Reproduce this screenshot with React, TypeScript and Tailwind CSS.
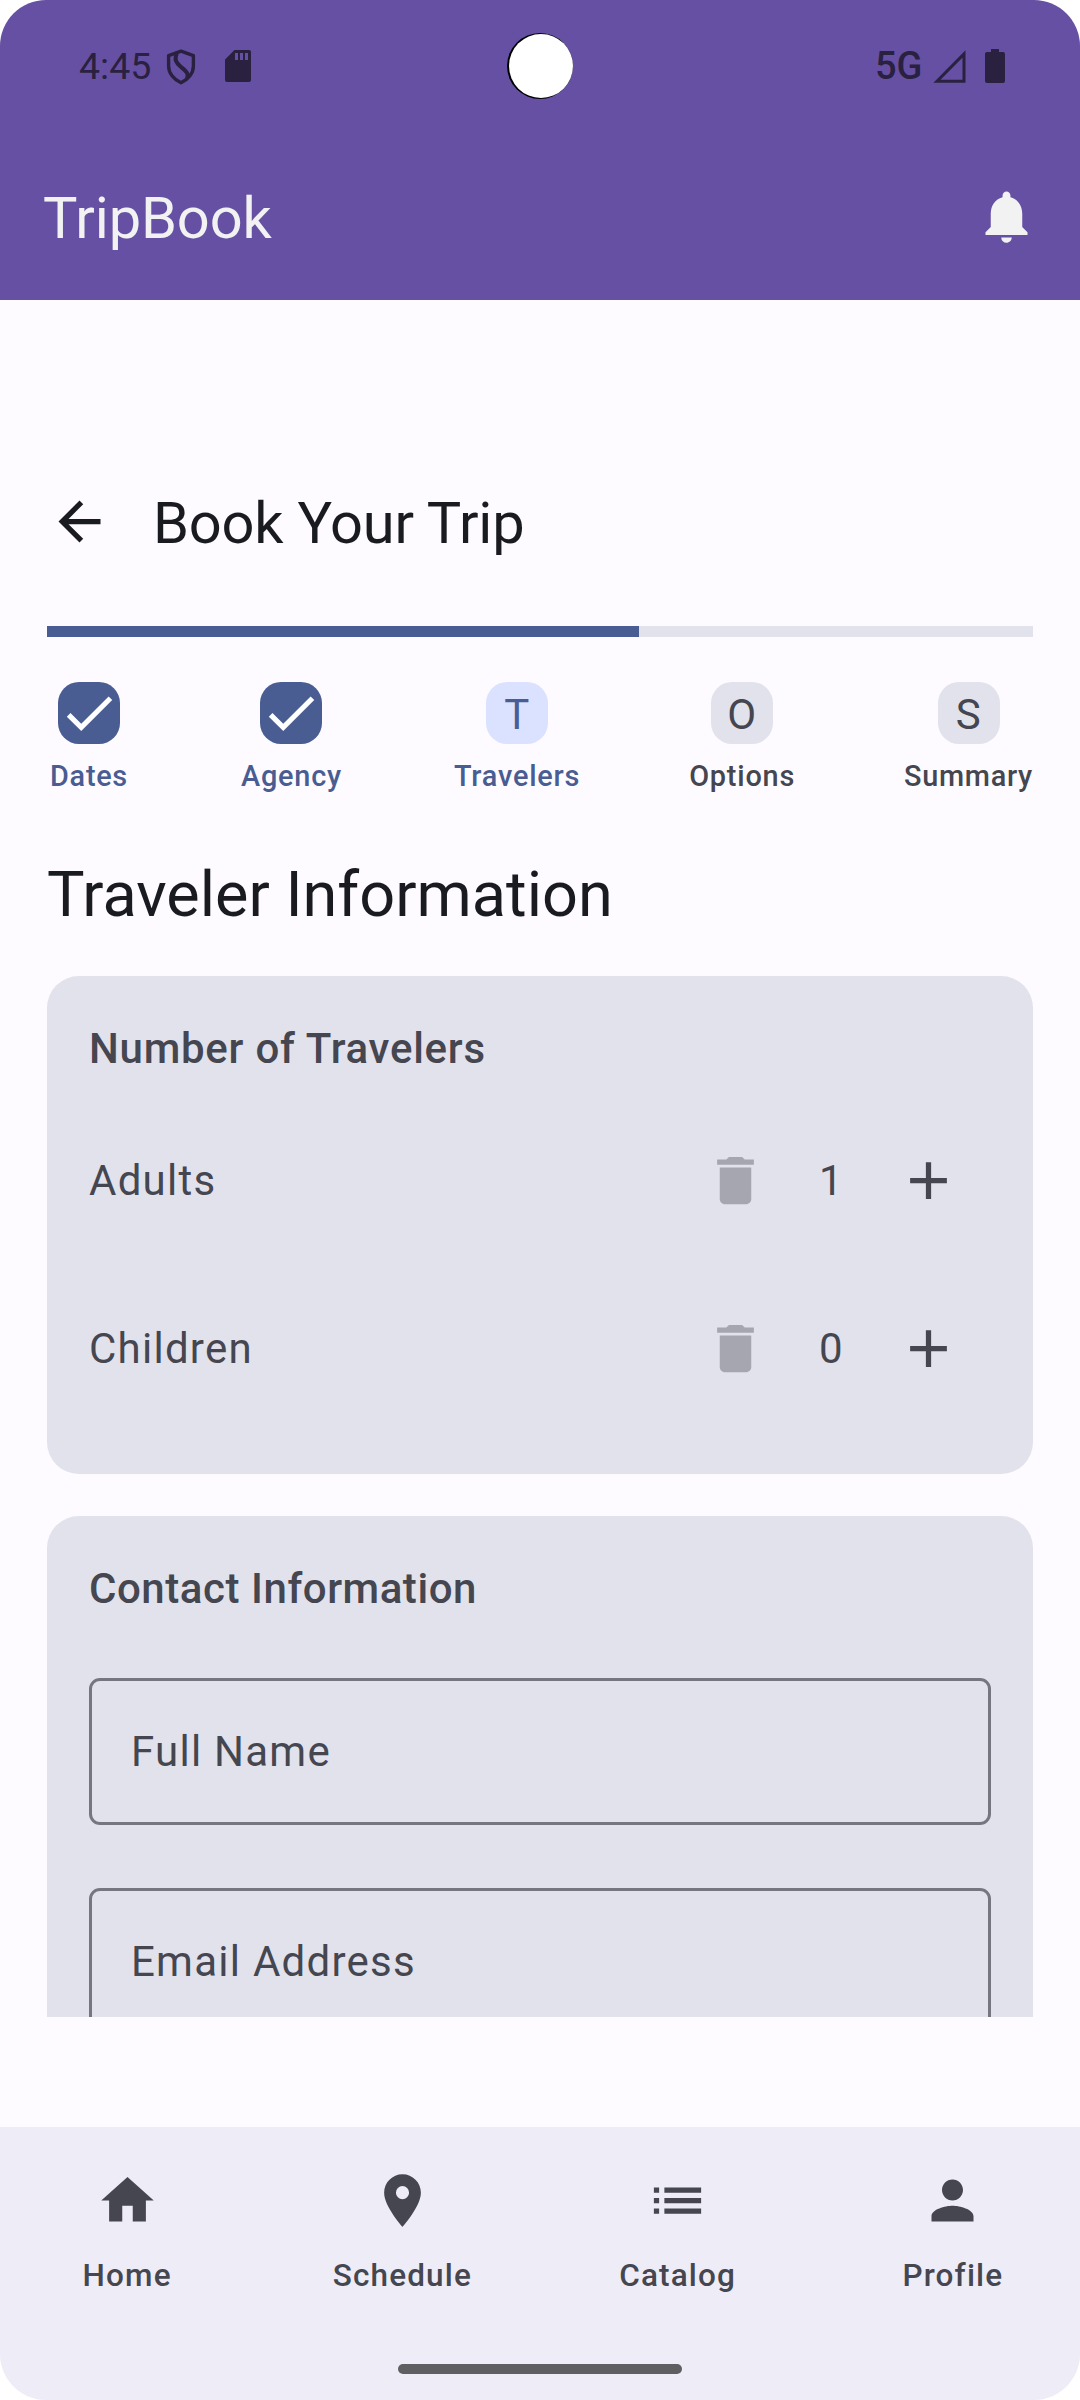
import {
  MdAdd,
  MdArrowBack,
  MdCheck,
  MdDelete,
  MdHome,
  MdList,
  MdNotifications,
  MdPerson,
  MdPlace,
} from "react-icons/md";
import type { IconType } from "react-icons";

function StatusBar() {
  return (
    <div className="relative flex h-[132px] items-center justify-between pr-[75px] pl-[79px] text-[#2a2040]">
      <div className="flex items-center">
        <span className="w-[87px] text-[37.5px] leading-[44px]">4:45</span>
        <svg className="mt-[2px] h-[36px] w-[30px]" viewBox="0 0 30 36" fill="none" stroke="currentColor" strokeWidth="3.4" strokeLinejoin="round">
          <path d="M15 2.200 27.400 6.600V17c0 7-5 13.500-12.400 16.800C7.600 30.500 2.600 24 2.600 17V6.600z" />
          <path d="M10.800 4.500C8 10.500 10 13.500 14.500 17.500S23.500 24 21 29.500" strokeWidth="4" />
        </svg>
        <svg className="ml-[29px] h-[32px] w-[26px]" viewBox="0 0 26 32" fill="currentColor" fillRule="evenodd">
          <path d="M9.500 0H24a2 2 0 0 1 2 2v28a2 2 0 0 1-2 2H2a2 2 0 0 1-2-2V9.500zM10 3v7h3V3zm5 0v7h3V3zm5 0v7h3V3z" />
        </svg>
      </div>
      <div className="flex items-center">
        <span className="w-[58px] text-[38px] leading-[44px] font-medium">5G</span>
        <svg className="h-[33px] w-[33px]" viewBox="0 0 33 33" fill="none" stroke="currentColor" strokeWidth="3">
          <path d="M4 31.200H31V4z" />
        </svg>
        <svg className="ml-[19px] h-[34px] w-[20px]" viewBox="0 0 20 34" fill="currentColor">
          <path d="M6 0h8v3h4a2 2 0 0 1 2 2v27a2 2 0 0 1-2 2H2a2 2 0 0 1-2-2V5a2 2 0 0 1 2-2h4z" />
        </svg>
      </div>
      <div className="absolute top-[33px] left-[507px] size-[66px] rounded-full bg-black">
        <div className="mt-[1px] ml-[2px] size-[64px] rounded-full bg-white" />
      </div>
    </div>
  );
}

const steps = [
  { label: "Dates", state: "done", spacing: "tracking-[0.7px]" },
  { label: "Agency", state: "done", spacing: "tracking-[0.8px]" },
  { label: "Travelers", state: "current", spacing: "ml-[2px] -mr-[2px] tracking-[0.8px]" },
  { label: "Options", state: "todo", spacing: "ml-[1px] -mr-[1px] tracking-[0.8px]" },
  { label: "Summary", state: "todo", spacing: "tracking-[0.7px]" },
];

const boxStyle: Record<string, string> = {
  done: "bg-[#495d92] text-white",
  current: "bg-[#dae2ff] text-[#495d92]",
  todo: "bg-[#e1e2ec] text-[#45464f]",
};

function Step({ label, state, spacing }: { label: string; state: string; spacing: string }) {
  return (
    <div className={`flex min-w-[84px] flex-col items-center ${spacing}`}>
      <div className={`flex size-[62px] items-center justify-center rounded-[21px] text-[42px] leading-[62px] ${boxStyle[state]}`}>
        {state === "done" ? <MdCheck className="size-[62px]" /> : <span className="pt-[3px]">{label[0]}</span>}
      </div>
      <span className={`mt-[11px] text-[28.875px] leading-[42px] font-medium ${state === "todo" ? "text-[#45464f]" : "text-[#495d92]"}`}>
        {label}
      </span>
    </div>
  );
}

function Counter({ label, value }: { label: string; value: number }) {
  return (
    <div className="flex h-[168px] items-center text-[42px] leading-[63px] tracking-[1.25px]">
      <span className="flex-1">{label}</span>
      <button className="flex size-[126px] items-center justify-center text-[#a6a6b0]">
        <MdDelete className="size-[63px]" />
      </button>
      <span className="w-[67px] text-center">{value}</span>
      <button className="flex size-[126px] items-center justify-center">
        <MdAdd className="size-[63px]" />
      </button>
    </div>
  );
}

function Field({ label }: { label: string }) {
  return (
    <div className="flex h-[147px] shrink-0 items-center rounded-[11px] border-[3px] border-[#757680] px-[39px] text-[42px] leading-[63px] tracking-[1.25px]">
      {label}
    </div>
  );
}

const tabs: { label: string; Icon: IconType }[] = [
  { label: "Home", Icon: MdHome },
  { label: "Schedule", Icon: MdPlace },
  { label: "Catalog", Icon: MdList },
  { label: "Profile", Icon: MdPerson },
];

export default function App() {
  return (
    <div className="h-[2400px] w-[1080px] bg-white">
      <div className="flex h-full flex-col overflow-hidden rounded-[46px] bg-[#fdfbff] font-['Roboto',sans-serif] text-[#45464f]">
        <header className="h-[300px] shrink-0 bg-[#6650a3]">
          <StatusBar />
          <div className="flex h-[168px] items-center justify-between pr-[42px] pl-[43px] text-[#f2f2f2]">
            <h1 className="pt-[3px] text-[57.75px] leading-[74px] tracking-[-0.1px]">TripBook</h1>
            <MdNotifications className="size-[63px]" />
          </div>
        </header>

        <main className="flex h-[1717px] shrink-0 flex-col overflow-hidden px-[47px]">
          <div className="mt-[158px] flex h-[126px] shrink-0 items-center text-[#1a1b20]">
            <MdArrowBack className="ml-[1px] size-[63px]" />
            <h2 className="ml-[42px] pt-[3px] text-[57.75px] leading-[74px] tracking-[-0.2px]">Book Your Trip</h2>
          </div>
          <div className="mt-[42px] h-[11px] shrink-0 bg-[#e1e2ec]">
            <div className="h-full w-[60%] bg-[#495d92]" />
          </div>
          <div className="mt-[45px] flex h-[115px] shrink-0 justify-between">
            {steps.map((s) => (
              <Step key={s.label} {...s} />
            ))}
          </div>
          <h3 className="mt-[56px] h-[84px] shrink-0 text-[63px] leading-[84px] text-[#1a1b20]">Traveler Information</h3>

          <section className="mt-[39px] h-[498px] shrink-0 rounded-[32px] bg-[#e1e2ec] px-[42px] pt-[41px]">
            <h4 className="mb-[16px] text-[42px] leading-[63px] font-medium tracking-[0.75px]">Number of Travelers</h4>
            <Counter label="Adults" value={1} />
            <Counter label="Children" value={0} />
          </section>

          <section className="mt-[42px] flex shrink-0 flex-col rounded-t-[32px] bg-[#e1e2ec] px-[42px] pt-[41px] pb-[42px]">
            <h4 className="mb-[58px] text-[42px] leading-[63px] font-medium tracking-[0.55px]">Contact Information</h4>
            <div className="flex flex-col gap-[63px]">
              <Field label="Full Name" />
              <Field label="Email Address" />
            </div>
          </section>
        </main>

        <div className="h-[110px] shrink-0" />
        <nav className="flex flex-1 flex-col items-center bg-[#eeedf7]">
          <div className="flex w-full flex-1 gap-[21px] pt-[42px]">
            {tabs.map(({ label, Icon }) => (
              <div key={label} className="flex flex-1 flex-col items-center">
                <Icon className="size-[63px]" />
                <span className="mt-[23px] text-[31.5px] leading-[42px] font-medium tracking-[1.15px]">{label}</span>
              </div>
            ))}
          </div>
          <div className="mb-[26px] h-[10px] w-[284px] rounded-full bg-[#5f5f61]" />
        </nav>
      </div>
    </div>
  );
}
